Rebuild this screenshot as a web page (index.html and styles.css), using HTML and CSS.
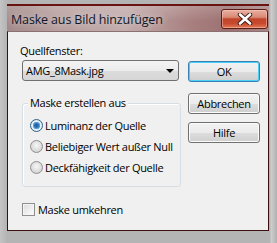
FILE: index.html
```html
<!DOCTYPE html>
<html>
<head>
<meta charset="utf-8">
<link rel="stylesheet" href="styles.css">
</head>
<body>
<div class="window">
  <div class="titlebar">
    <span class="title">Maske aus Bild hinzufügen</span>
    <div class="close">
      <svg width="16" height="12" viewBox="0 0 16 12">
        <path d="M3 1.5 L13 10.5 M13 1.5 L3 10.5" stroke="#3a1a14" stroke-width="4.4" stroke-linecap="round"/>
        <path d="M3 1.5 L13 10.5 M13 1.5 L3 10.5" stroke="#ffffff" stroke-width="2.6" stroke-linecap="round"/>
      </svg>
    </div>
  </div>
  <div class="client">
    <div class="leftcol">
      <div class="label">Quellfenster:</div>
      <div class="combo">
        <span>AMG_8Mask.jpg</span>
        <span class="arrow"></span>
      </div>
      <div class="group">
        <span class="legend">Maske erstellen aus</span>
        <div class="opt"><span class="radio on"></span>Luminanz der Quelle</div>
        <div class="opt"><span class="radio"></span>Beliebiger Wert außer Null</div>
        <div class="opt"><span class="radio"></span>Deckfähigkeit der Quelle</div>
      </div>
      <div class="check"><span class="box"></span>Maske umkehren</div>
    </div>
    <div class="rightcol">
      <div class="btn default">OK</div>
      <div class="btn">Abbrechen</div>
      <div class="btn">Hilfe</div>
    </div>
  </div>
</div>
</body>
</html>
```
FILE: styles.css
```css
html, body {
  margin: 0;
  padding: 0;
}
body {
  width: 277px;
  height: 243px;
  overflow: hidden;
  background: #b9b9b9;
  font-family: "Open Sans", "Noto Sans", sans-serif;
  font-size: 11px;
  letter-spacing: -0.3px;
  color: #000;
  white-space: nowrap;
}
.window {
  width: 277px;
  height: 243px;
  box-sizing: border-box;
  padding: 4px 8px 10px 7px;
  background: linear-gradient(to right, #c4c4c4 0, #b4b4b4 7px, #b4b4b4 270px, #cfcfcf 271px, #b0b0b0 277px);
}
.titlebar {
  height: 27px;
  border-top: 2px solid #6a1412;
  box-sizing: border-box;
  display: flex;
  align-items: center;
  justify-content: space-between;
  padding: 0 1px 0 4px;
  background:
    linear-gradient(to bottom, rgba(255,255,255,0.18), rgba(255,255,255,0) 60%),
    linear-gradient(to right, #a38a8a 0%, #b9a0a0 20%, #c3acac 45%, #a88080 70%, #9c7070 85%, #a78686 100%);
}
.title {
  font-size: 12.5px;
  letter-spacing: -0.15px;
  color: #101828;
  text-shadow: 0 0 6px rgba(255,255,255,0.7);
  margin-top: 1px;
}
.close {
  width: 47px;
  height: 20px;
  box-sizing: border-box;
  border: 1px solid #5a1c14;
  border-radius: 3px;
  display: flex;
  align-items: center;
  justify-content: center;
  background: linear-gradient(to bottom, #e9b0a2 0%, #d98a74 40%, #c0442a 50%, #c84a2e 75%, #e07a58 100%);
  box-shadow: inset 0 0 0 1px rgba(255,210,200,0.45);
}
.client {
  height: 200px;
  box-sizing: border-box;
  border: 1px solid #3c0e0e;
  border-top: 1px solid #8a7070;
  background: #f0f0f0;
  display: flex;
  padding: 11px 0 0 12px;
  gap: 7px;
}
.leftcol {
  width: 161px;
  display: flex;
  flex-direction: column;
}
.label {
  line-height: 15px;
  height: 15px;
}
.combo {
  margin: 2px 0 0 2px;
  width: 157px;
  height: 21px;
  box-sizing: border-box;
  border: 1px solid #707070;
  border-radius: 3px;
  background: linear-gradient(to bottom, #f4f4f4 0%, #ececec 50%, #dcdcdc 51%, #d6d6d6 100%);
  display: flex;
  align-items: center;
  justify-content: space-between;
  padding: 0 4px 0 3px;
}
.arrow {
  width: 0;
  height: 0;
  border-left: 4px solid transparent;
  border-right: 4px solid transparent;
  border-top: 4px solid #000;
}
.group {
  position: relative;
  margin: 22px 0 0 2px;
  width: 159px;
  height: 84px;
  box-sizing: border-box;
  border: 1px solid #d5dfe5;
  border-radius: 3px;
  box-shadow: inset 1px 1px 0 #ffffff;
  padding: 11px 0 0 7px;
}
.legend {
  position: absolute;
  left: 5px;
  top: -9px;
  padding: 0 2px;
  background: #f0f0f0;
  line-height: 15px;
}
.opt {
  display: flex;
  align-items: center;
  height: 20px;
  gap: 1px;
}
.opt + .opt {
  margin-top: 1px;
}
.radio {
  width: 13px;
  height: 13px;
  box-sizing: border-box;
  border-radius: 50%;
  border: 1px solid #8e8f8f;
  background: radial-gradient(circle at 50% 40%, #f6f6f6 0, #e0e0e0 50%, #c9c9c9 100%);
  display: inline-block;
  position: relative;
  margin-right: 1px;
}
.radio.on {
  border-color: #2c628b;
  background: radial-gradient(circle at 50% 50%, #1d5c9a 0, #2b74b8 2px, #6aaee6 3.5px, #e8f0f8 4px, #d8e4ee 100%);
}
.check {
  margin-top: 15px;
  display: flex;
  align-items: center;
  height: 15px;
  gap: 3px;
  padding-left: 2px;
}
.box {
  width: 13px;
  height: 13px;
  box-sizing: border-box;
  border: 1px solid #8f8f8f;
  background: linear-gradient(135deg, #dcdcdc 0%, #f0f0f0 60%, #ffffff 100%);
  box-shadow: inset 0 0 0 1px #f4f4f4;
}
.rightcol {
  margin-top: 18px;
  display: flex;
  flex-direction: column;
}
.btn {
  width: 72px;
  height: 21px;
  box-sizing: border-box;
  border: 1px solid #707070;
  border-radius: 3px;
  background: linear-gradient(to bottom, #f2f2f2 0%, #ebebeb 50%, #dddddd 51%, #cfcfcf 100%);
  box-shadow: inset 0 0 0 1px #fbfbfb;
  display: flex;
  align-items: center;
  justify-content: center;
  margin-bottom: 8px;
}
.btn.default {
  border-color: #3c7fb1;
  box-shadow: inset 0 0 0 1px #48d0f8;
  margin-bottom: 11px;
}
```
